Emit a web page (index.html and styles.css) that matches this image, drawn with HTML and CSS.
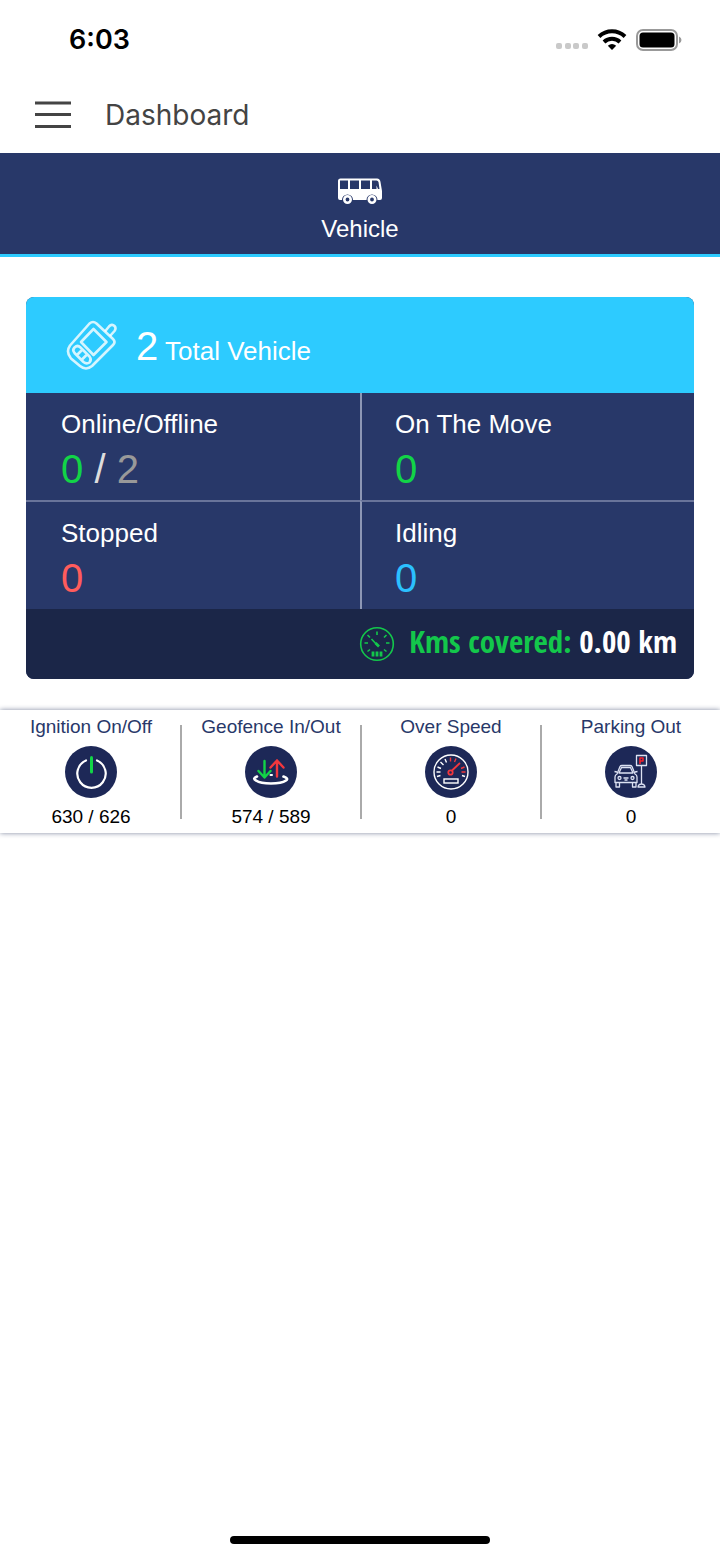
FILE: index.html
```html
<!DOCTYPE html>
<html lang="en">
<head>
<meta charset="utf-8">
<meta name="viewport" content="width=device-width, initial-scale=1">
<title>Dashboard</title>
<link rel="stylesheet" href="styles.css">
</head>
<body>
<div class="screen">
  <div class="status-bar">
    <time class="clock">6:03</time>
    <div class="status-icons">
      <svg width="32" height="8" viewBox="0 0 32 8" fill="#c9c9c9"><rect x="0" y="1" width="6" height="6" rx="2"/><rect x="9" y="1" width="6" height="6" rx="2"/><rect x="17" y="1" width="6" height="6" rx="2"/><rect x="26" y="1" width="6" height="6" rx="2"/></svg>
      <svg class="wifi" width="30" height="22" viewBox="0 0 30 22" fill="none" stroke="#000" stroke-width="4"><path d="M2 7.500C9.500.6 20.500.6 28 7.500"/><path d="M7 13C11.500 8.800 18.500 8.800 23 13"/><path d="M15 21L10.800 16.800Q15 13.400 19.200 16.800Z" fill="#000" stroke="none"/></svg>
      <svg width="46" height="22" viewBox="0 0 46 22"><rect x="1" y="1" width="40" height="20" rx="6" fill="none" stroke="#999" stroke-width="2"/><rect x="3.500" y="3.500" width="35" height="15" rx="3.500"/><path d="M43 7.500Q45.500 8.500 45.500 11T43 14.500Z" fill="#999"/></svg>
    </div>
  </div>
  <header class="app-bar">
    <button class="menu" type="button" aria-label="Menu"><svg width="36" height="28" viewBox="0 0 36 28" fill="#444"><rect y="0.500" width="36" height="3"/><rect y="12" width="36" height="3"/><rect y="24" width="36" height="3"/></svg></button>
    <h1 class="title">Dashboard</h1>
  </header>
  <nav>
    <button class="tab" type="button">
      <svg width="46" height="28" viewBox="0 0 46 28"><path fill="#fff" fill-rule="evenodd" d="M3.500.5H40Q43 .5 43.500 4L45 13V20Q45 22 43 22H40.500A5.500 5.500 0 0 0 29.500 22H16A5.500 5.500 0 0 0 5 22H3Q1 22 1 20V3Q1 .5 3.500.5ZM3 2.500V11H11V2.500ZM13 2.500V11H22V2.500ZM24 2.500V11H33V2.500ZM35 2.500V11H39.500V7.500L41 11H42.500L41.500 4Q41 2.500 39.500 2.500Z"/><circle cx="10.500" cy="21.500" r="3.200" fill="none" stroke="#fff" stroke-width="2.600"/><circle cx="35" cy="21.500" r="3.200" fill="none" stroke="#fff" stroke-width="2.600"/></svg>
      <span>Vehicle</span>
    </button>
  </nav>
  <main>
    <section class="card">
      <h2 class="card-head">
        <svg width="52" height="52" viewBox="0 0 52 52" fill="none" stroke="#fff" stroke-opacity=".8" stroke-width="2.600" stroke-linejoin="round"><path d="M23.500 3.500Q27 .5 30.500 3.500L47 19Q50 22 47 25L26 46Q20 51 14 46L5 38.500Q-.5 32 4 25.500Z"/><path d="M27.500 9L40.500 22L27.500 35L15 22Z"/><path d="M8.500 27.500Q11.500 24.500 14.500 27.500L23.500 36.500Q26 39.500 23.500 42.500Q20.500 44.500 17.500 42L8.500 33Q6 30 8.500 27.500ZM16.500 29.500L11 35M21 34.500L15.500 40"/><path d="M39 11.500L43 6.500Q46 3.500 48.500 6Q50.500 8 48.500 11L44 16"/></svg>
        <span><span class="number">2</span> Total Vehicle</span>
      </h2>
      <dl class="metrics">
        <div class="metric"><dt>Online/Offline</dt><dd class="number"><span class="green">0</span> <span class="slash">/</span> <span class="grey">2</span></dd></div>
        <div class="metric"><dt>On The Move</dt><dd class="number green">0</dd></div>
        <div class="metric"><dt>Stopped</dt><dd class="number red">0</dd></div>
        <div class="metric"><dt>Idling</dt><dd class="number blue">0</dd></div>
      </dl>
      <p class="distance">
        <svg width="36" height="36" viewBox="0 0 36 36" fill="none" stroke="#13c74b" stroke-width="1.600"><circle cx="18" cy="18" r="16.300"/><path d="M18 5.500V9M5.500 17H9M27 17H30.500M8.500 9L11 11.500M27.500 9L25 11.500M8.500 25.500L11 23.500M27.500 25.500L25 23.500M12.500 13L19 20"/><path d="M16.500 17L20 20.500" stroke-width="2.600"/><path d="M14 25.500V30.500M18 25.500V30.500M22 25.500V30.500" stroke-width="2.800"/></svg>
        <span class="distance-text"><span class="distance-label">Kms covered:</span> 0.00 km</span>
      </p>
    </section>
    <section class="alerts">
      <div class="alert">
        <h3>Ignition On/Off</h3>
        <svg width="52" height="52" viewBox="0 0 52 52" fill="none" stroke="#fff" stroke-width="2.200" stroke-linecap="round"><circle cx="26" cy="26" r="26" fill="#1d2857" stroke="none"/><path d="M21 14.500A14.200 14.200 0 1 0 32 14.500"/><path d="M26.500 11.500V26" stroke="#12d447" stroke-width="3"/></svg>
        <p>630 / 626</p>
      </div>
      <div class="alert">
        <h3>Geofence In/Out</h3>
        <svg width="52" height="52" viewBox="0 0 52 52" fill="none" stroke-width="2.400" stroke-linecap="round" stroke-linejoin="round"><circle cx="26" cy="26" r="26" fill="#1d2857"/><path stroke="#fff" stroke-width="2.600" d="M12 30.500Q7 32.500 11 34.500C17 38.500 35 38.500 41 34.500Q44 32.500 38.500 30.500"/><path stroke="#fff" stroke-width="2" d="M25.500 29H27"/><path stroke="#12d447" d="M19.500 15V31M13.500 25L19.500 31.500L25.500 25"/><path stroke="#f2373d" d="M32 30.500V14.500M25.500 21.500L32 14.500L38.500 21.500"/></svg>
        <p>574 / 589</p>
      </div>
      <div class="alert">
        <h3>Over Speed</h3>
        <svg width="52" height="52" viewBox="0 0 52 52" fill="none" stroke="#fff" stroke-width="1.400"><circle cx="26" cy="26" r="26" fill="#1d2857" stroke="none"/><circle cx="26" cy="26" r="17"/><path d="M11.500 26H15.500M12 30.500L15.500 29.500M12.500 21L16 22.500M15.500 16L18.500 19M20 13L21.500 16.500M37 29.500L40 30.500"/><path stroke="#f2373d" d="M25.500 11.500V15.500M31 12.500L29.500 16M39.500 21L36 22.500M40.500 26H36.500"/><path stroke="#f2373d" stroke-width="1.800" d="M27 24.500L35 17"/><circle cx="25.500" cy="26.500" r="2.200" stroke="#f2373d" stroke-width="1.800"/><rect x="19" y="33" width="14" height="4"/></svg>
        <p>0</p>
      </div>
      <div class="alert">
        <h3>Parking Out</h3>
        <svg width="52" height="52" viewBox="0 0 52 52" fill="none" stroke="#dce1f2" stroke-width="1.300" stroke-linejoin="round"><circle cx="26" cy="26" r="26" fill="#1d2857" stroke="none"/><path d="M12 28L15 20.500Q15.500 19.500 17 19.500H25Q26.500 19.500 27 20.500L30 28Q32 29 32 31V36.500H10V31Q10 29 12 28ZM14 27L16.500 21.500H25.500L28 27ZM11 37V41H14.500V37M27.500 37V41H31V37M12 26L9.500 25.500M30 26L32.500 25.500M18.500 32H23.500M19.500 34H22.500"/><circle cx="14.500" cy="32" r="1.500"/><circle cx="27.500" cy="32" r="1.500"/><rect x="31.500" y="9.500" width="10" height="10"/><path d="M36.500 19.500V37.500M33 41Q33.500 38 36.500 38T40 41Z"/><path stroke="#f2202d" stroke-width="1.600" d="M35 18V12H38V15H35"/></svg>
        <p>0</p>
      </div>
    </section>
  </main>
  <div class="home-indicator"></div>
</div>
</body>
</html>
```
FILE: styles.css
```css
* {
  box-sizing: border-box;
}

body,
h1,
h2,
h3,
p,
dl,
dd {
  margin: 0;
}

body {
  background: #fff;
  font-family: "Liberation Sans", Arial, sans-serif;
}

svg {
  display: block;
  flex: none;
}

button {
  border: 0;
  padding: 0;
  background: none;
  font: inherit;
  cursor: pointer;
}

.screen {
  display: flex;
  flex-direction: column;
  min-height: 100vh;
}

.status-bar {
  display: flex;
  align-items: center;
  justify-content: space-between;
  height: 76px;
  padding: 4px 38px 0 69px;
}

.clock {
  font: 600 27px/32px Inter, sans-serif;
}

.status-icons {
  display: flex;
  align-items: center;
  gap: 9px;
}

.status-icons svg:first-child {
  margin-top: 12px;
}

.app-bar {
  display: flex;
  align-items: center;
  gap: 34px;
  height: 77px;
  padding: 0 35px;
}

.title {
  color: #444;
  font: 400 28px/36px Inter, sans-serif;
}

.tab {
  display: flex;
  flex-direction: column;
  align-items: center;
  gap: 8px;
  width: 100%;
  padding: 25px 0 10px;
  border-bottom: 3px solid #2dcbff;
  background: #283869;
  color: #fff;
  font-size: 24px;
  line-height: 30px;
}

main {
  flex: 1;
}

.card {
  margin: 40px 26px 31px;
  border-radius: 8px;
  overflow: hidden;
  background: #283869;
  color: #fff;
}

.card-head {
  display: flex;
  align-items: center;
  gap: 18px;
  height: 96px;
  padding: 2px 40px 0;
  background: #2dcbff;
  font-size: 26px;
  font-weight: 400;
}

.number {
  font-size: 40px;
  line-height: 44px;
}

.metrics {
  display: grid;
  grid-template-columns: 1fr 1fr;
}

.metric {
  padding: 15px 33px 9px;
  border-left: 2px solid #8d97b5;
}

.metric:nth-child(odd) {
  padding-left: 35px;
  border-left: 0;
}

.metric:nth-child(n + 3) {
  border-top: 2px solid #69749a;
}

.metric dt {
  margin-bottom: 7px;
  font-size: 26px;
  line-height: 32px;
}

.green {
  color: #12d447;
}

.slash {
  color: #ddd;
}

.grey {
  color: #999;
}

.red {
  color: #ff5c5c;
}

.blue {
  color: #2bc0ff;
}

.distance {
  display: flex;
  align-items: center;
  justify-content: flex-end;
  gap: 14px;
  height: 70px;
  padding: 0 17px;
  background: #1b2648;
  font: 700 31px/36px "Liberation Sans Narrow", "Arial Narrow", "Open Sans Condensed", "DejaVu Sans Condensed", sans-serif;
}

.distance-text {
  padding-bottom: 6px;
}

.distance-label {
  color: #13c74b;
}

.alerts {
  display: grid;
  grid-template-columns: repeat(4, 1fr);
  padding: 5px 0 4px;
  box-shadow: 0 0 5px #8089a0;
}

.alert {
  display: flex;
  flex-direction: column;
  align-items: center;
  gap: 7px;
  padding-left: 2px;
  background: linear-gradient(#aaa, #aaa) left center / 2px 94px no-repeat;
  font-size: 19px;
  line-height: 24px;
}

.alert:first-child {
  background: none;
}

.alert h3 {
  color: #283869;
  font-size: 19px;
  font-weight: 400;
  white-space: nowrap;
}

.home-indicator {
  width: 36%;
  height: 8px;
  margin: 0 auto 14px;
  border-radius: 4px;
  background: #000;
}
```
